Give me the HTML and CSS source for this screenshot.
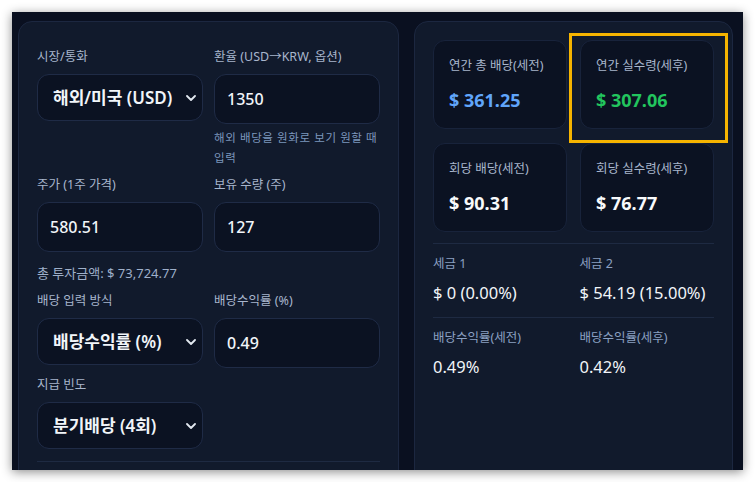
FILE: index.html
```html
<!DOCTYPE html>
<html lang="ko">
<head>
    <meta charset="UTF-8">
    <meta name="viewport" content="width=device-width, initial-scale=1.0">
    <title>배당 계산기</title>
    <link rel="stylesheet" href="styles.css">
</head>
<body>
    <div class="window">
        <div class="layout">
            <!-- 입력 패널 -->
            <section class="panel form-panel">
                <div class="row">
                    <div class="field">
                        <label class="label">시장/통화</label>
                        <div class="select-wrap">
                            <select class="select">
                                <option>해외/미국 (USD)</option>
                            </select>
                            <svg class="chevron" width="10" height="6" viewBox="0 0 10 6"><path d="M1 1l4 4 4-4" fill="none" stroke="#e2e8f0" stroke-width="1.8" stroke-linecap="round" stroke-linejoin="round"/></svg>
                        </div>
                    </div>
                    <div class="field">
                        <label class="label">환율 (USD→KRW, 옵션)</label>
                        <input class="input" type="text" value="1350">
                        <p class="hint">해외 배당을 원화로 보기 원할 때 입력</p>
                    </div>
                </div>

                <div class="row">
                    <div class="field">
                        <label class="label">주가 (1주 가격)</label>
                        <input class="input" type="text" value="580.51">
                    </div>
                    <div class="field">
                        <label class="label">보유 수량 (주)</label>
                        <input class="input" type="text" value="127">
                    </div>
                </div>
                <p class="total">총 투자금액: $ 73,724.77</p>

                <div class="row">
                    <div class="field">
                        <label class="label">배당 입력 방식</label>
                        <div class="select-wrap">
                            <select class="select">
                                <option>배당수익률 (%)</option>
                            </select>
                            <svg class="chevron" width="10" height="6" viewBox="0 0 10 6"><path d="M1 1l4 4 4-4" fill="none" stroke="#e2e8f0" stroke-width="1.8" stroke-linecap="round" stroke-linejoin="round"/></svg>
                        </div>
                    </div>
                    <div class="field">
                        <label class="label">배당수익률 (%)</label>
                        <input class="input" type="text" value="0.49">
                    </div>
                </div>

                <div class="row">
                    <div class="field">
                        <label class="label">지급 빈도</label>
                        <div class="select-wrap">
                            <select class="select">
                                <option>분기배당 (4회)</option>
                            </select>
                            <svg class="chevron" width="10" height="6" viewBox="0 0 10 6"><path d="M1 1l4 4 4-4" fill="none" stroke="#e2e8f0" stroke-width="1.8" stroke-linecap="round" stroke-linejoin="round"/></svg>
                        </div>
                    </div>
                </div>
                <hr class="divider">
            </section>

            <!-- 결과 패널 -->
            <section class="panel result-panel">
                <div class="cards">
                    <div class="card">
                        <div class="card-label">연간 총 배당(세전)</div>
                        <div class="card-value blue">$ 361.25</div>
                    </div>
                    <div class="card highlighted">
                        <div class="card-label">연간 실수령(세후)</div>
                        <div class="card-value green">$ 307.06</div>
                        <div class="highlight-box"></div>
                    </div>
                    <div class="card">
                        <div class="card-label">회당 배당(세전)</div>
                        <div class="card-value">$ 90.31</div>
                    </div>
                    <div class="card">
                        <div class="card-label">회당 실수령(세후)</div>
                        <div class="card-value">$ 76.77</div>
                    </div>
                </div>

                <div class="stats">
                    <div class="stat">
                        <div class="stat-label">세금 1</div>
                        <div class="stat-value">$ 0 (0.00%)</div>
                    </div>
                    <div class="stat">
                        <div class="stat-label">세금 2</div>
                        <div class="stat-value">$ 54.19 (15.00%)</div>
                    </div>
                </div>
                <div class="stats">
                    <div class="stat">
                        <div class="stat-label">배당수익률(세전)</div>
                        <div class="stat-value">0.49%</div>
                    </div>
                    <div class="stat">
                        <div class="stat-label">배당수익률(세후)</div>
                        <div class="stat-value">0.42%</div>
                    </div>
                </div>
            </section>
        </div>
    </div>
</body>
</html>
```

FILE: styles.css
```css
* {
    box-sizing: border-box;
}
body {
    margin: 0;
    background: #ffffff;
    font-family: "Noto Sans", "Noto Sans CJK KR", sans-serif;
    color: #e5e9f0;
}
.window {
    margin: 12px;
    width: 731px;
    height: 458px;
    background: #0a1020;
    box-shadow: 0 2px 10px rgba(0,0,0,0.45);
    overflow: hidden;
}
.layout {
    display: grid;
    grid-template-columns: 381px 319px;
    column-gap: 15px;
    padding: 9px 0 0 6px;
}
.panel {
    background: #111a2c;
    border: 1px solid #1c2740;
    border-radius: 14px;
    min-height: 480px;
}
.form-panel {
    padding: 26px 18px 18px;
}
.result-panel {
    padding: 18px;
}

/* form */
.row {
    display: grid;
    grid-template-columns: 166px 166px;
    column-gap: 11px;
    margin-bottom: 8px;
}
.field {
    display: flex;
    flex-direction: column;
}
.label {
    font-size: 12.5px;
    line-height: 18px;
    color: #a8b6cc;
    margin-bottom: 8px;
}
.select-wrap {
    position: relative;
}
.select {
    appearance: none;
    -webkit-appearance: none;
    width: 100%;
    height: 47px;
    padding: 0 26px 0 15px;
    background: #0b1222;
    border: 1px solid #1f2b46;
    border-radius: 12px;
    color: #f1f5f9;
    font-family: inherit;
    font-size: 17px;
    font-weight: 600;
}
.chevron {
    position: absolute;
    right: 7px;
    top: 21px;
}
.input {
    width: 100%;
    height: 50px;
    padding: 0 12px;
    background: #0b1222;
    border: 1px solid #1f2b46;
    border-radius: 12px;
    color: #f1f5f9;
    font-family: inherit;
    font-size: 16px;
    font-weight: 500;
}
.hint {
    margin: 4px 0 0;
    font-size: 11.5px;
    line-height: 20px;
    letter-spacing: 0.6px;
    color: #7d97bd;
}
.total {
    margin: 12px 0 10px;
    font-size: 13px;
    line-height: 18px;
    color: #9fb0ca;
}
.divider {
    border: 0;
    border-top: 1px solid #1e2a42;
    margin: 12px 0 0;
}

/* results */
.cards {
    display: grid;
    grid-template-columns: 134px 134px;
    column-gap: 13px;
    row-gap: 14px;
}
.card {
    position: relative;
    background: #0b1222;
    border: 1px solid #18233b;
    border-radius: 12px;
    padding: 16px 15px 16px;
    height: 89px;
}
.card-label {
    font-size: 12.5px;
    line-height: 18px;
    color: #a8b6cc;
}
.card-value {
    margin-top: 13px;
    font-size: 18px;
    line-height: 24px;
    font-weight: 700;
    color: #f8fafc;
}
.blue {
    color: #60a5fa;
}
.green {
    color: #22c55e;
}
.highlight-box {
    position: absolute;
    top: -8px;
    left: -12px;
    width: 159px;
    height: 110px;
    border: 3px solid #f6b400;
}
.stats {
    display: grid;
    grid-template-columns: 1fr 1fr;
    column-gap: 12px;
    border-top: 1px solid #1e2a42;
    margin-top: 11px;
    padding-top: 11px;
}
.stats + .stats {
    margin-top: 12px;
}
.stat-label {
    font-size: 12.5px;
    line-height: 18px;
    color: #8ba0c2;
}
.stat-value {
    margin-top: 8px;
    font-size: 16.5px;
    line-height: 24px;
    color: #f1f5f9;
}
```
